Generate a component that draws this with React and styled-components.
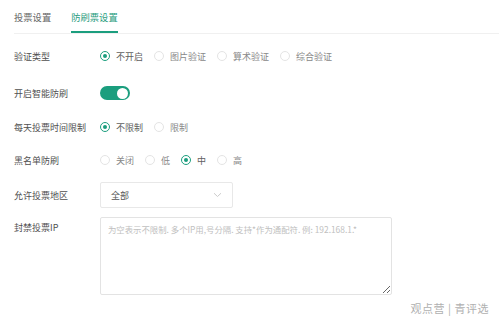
import React from "react"
import styled, { createGlobalStyle } from "styled-components"

const green = "#1b9e7e"

const Global = createGlobalStyle`
  body {
    margin: 0;
    background: #fff;
    font-family: "Noto Sans CJK SC", "Noto Sans", sans-serif;
  }
`

const Page = styled.div`
  width: 499px;
  height: 322px;
  position: relative;
  overflow: hidden;
  background: #fff;
`

const Tabs = styled.div`
  display: flex;
  margin-left: 14px;
  height: 33px;
  border-bottom: 1px solid #f0f0f0;
  gap: 20px;
`

const Tab = styled.div`
  display: flex;
  align-items: center;
  height: 100%;
  box-sizing: border-box;
  padding-top: 2px;
  font-size: 9.3px;
  color: ${p => (p.$active ? "#2a9d80" : "#666")};
  border-bottom: 2px solid ${p => (p.$active ? green : "transparent")};
  margin-bottom: -1px;
`

const Form = styled.div`
  display: flex;
  flex-direction: column;
  padding-left: 14px;
  padding-top: 12px;
`

const Row = styled.div`
  display: flex;
  align-items: ${p => (p.$top ? "flex-start" : "center")};
  min-height: 20px;
  margin-top: ${p => p.$mt || 0}px;
`

const Label = styled.div`
  width: 86px;
  flex: none;
  font-size: 9px;
  color: #505050;
  padding-top: ${p => (p.$top ? 4 : 0)}px;
`

const Options = styled.div`
  display: flex;
  align-items: center;
`

const Option = styled.label`
  display: flex;
  align-items: center;
  margin-right: 11px;
  font-size: 9px;
  color: ${p => (p.$checked ? "#606060" : "#888")};
`

const Circle = styled.span`
  box-sizing: border-box;
  width: 10px;
  height: 10px;
  border-radius: 50%;
  border: 1px solid ${p => (p.$checked ? green : "#e4e4e4")};
  margin-right: 6px;
  display: flex;
  align-items: center;
  justify-content: center;
  &::after {
    content: "";
    width: 4px;
    height: 4px;
    border-radius: 50%;
    background: ${p => (p.$checked ? green : "transparent")};
  }
`

const Toggle = styled.div`
  width: 30px;
  height: 14px;
  border-radius: 7px;
  background: ${green};
  display: flex;
  align-items: center;
  justify-content: flex-end;
  padding-right: 2px;
  box-sizing: border-box;
  &::after {
    content: "";
    width: 11px;
    height: 11px;
    border-radius: 50%;
    background: #fff;
  }
`

const Select = styled.div`
  width: 133px;
  height: 26px;
  box-sizing: border-box;
  border: 1px solid #e8e8e8;
  border-radius: 2px;
  display: flex;
  align-items: center;
  justify-content: space-between;
  padding: 0 10px 0 10px;
  font-size: 9px;
  color: #555;
`

const TextArea = styled.textarea`
  width: 292px;
  height: 78px;
  box-sizing: border-box;
  border: 1px solid #e3e3e3;
  border-radius: 2px;
  padding: 5px 7px;
  font-family: "Noto Sans CJK SC", "Noto Sans", sans-serif;
  font-size: 8.4px;
  color: #444;
  outline: none;
  margin: 0;
  &::placeholder {
    color: #c0c0c0;
  }
`

const Watermark = styled.div`
  position: absolute;
  right: 10px;
  bottom: 6px;
  font-size: 11px;
  color: #b0b0b0;
  font-family: "Noto Sans CJK SC", serif;
  letter-spacing: 0.5px;
`

const Radio = ({ label, checked }) => (
  <Option $checked={checked}>
    <Circle $checked={checked} />
    {label}
  </Option>
)

const RadioGroup = ({ items, value }) => (
  <Options>
    {items.map(it => (
      <Radio key={it} label={it} checked={it === value} />
    ))}
  </Options>
)

const Chevron = () => (
  <svg width="9" height="6" viewBox="0 0 9 6">
    <path d="M1 1.2 L4.5 4.5 L8 1.2" fill="none" stroke="#cccccc" strokeWidth="1" />
  </svg>
)

export default function App() {
  return (
    <Page>
      <Global />
      <Tabs>
        <Tab>投票设置</Tab>
        <Tab $active>防刷票设置</Tab>
      </Tabs>
      <Form>
        <Row>
          <Label>验证类型</Label>
          <RadioGroup items={["不开启", "图片验证", "算术验证", "综合验证"]} value="不开启" />
        </Row>
        <Row $mt={17}>
          <Label>开启智能防刷</Label>
          <Toggle />
        </Row>
        <Row $mt={14}>
          <Label>每天投票时间限制</Label>
          <RadioGroup items={["不限制", "限制"]} value="不限制" />
        </Row>
        <Row $mt={13}>
          <Label>黑名单防刷</Label>
          <RadioGroup items={["关闭", "低", "中", "高"]} value="中" />
        </Row>
        <Row $mt={12}>
          <Label>允许投票地区</Label>
          <Select>
            <span>全部</span>
            <Chevron />
          </Select>
        </Row>
        <Row $mt={9} $top>
          <Label $top>封禁投票IP</Label>
          <TextArea placeholder="为空表示不限制. 多个IP用,号分隔. 支持*作为通配符. 例: 192.168.1.*" />
        </Row>
      </Form>
      <Watermark>观点营 | 青评选</Watermark>
    </Page>
  )
}
